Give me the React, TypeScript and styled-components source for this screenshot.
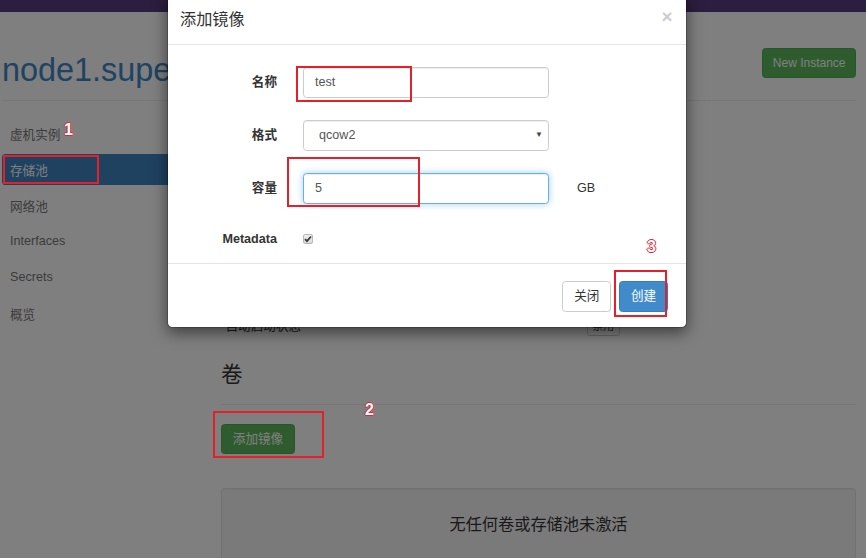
import React from "react";
import styled, { createGlobalStyle } from "styled-components";

const FONT = `"Liberation Sans", Arial, "Noto Sans CJK SC", sans-serif`;

const Global = createGlobalStyle`
  html, body { margin: 0; padding: 0; background: #fff; overflow: hidden; }
  body { font-family: ${FONT}; font-size: 12.6px; color: #333; }
  * { box-sizing: border-box; }
`;

const Frame = styled.div`
  position: relative;
  width: 866px;
  height: 558px;
  overflow: hidden;
  background: #fff;
`;

const Navbar = styled.div`
  height: 12px;
  background: #563d7c;
`;

const Container = styled.div`
  padding: 0 10px 0 2px;
`;

const PageHeader = styled.header`
  display: flex;
  justify-content: space-between;
  align-items: flex-start;
  height: 89px;
  padding-top: 36px;
  border-bottom: 1px solid #eee;
`;

const HostTitle = styled.h1`
  margin: 4px 0 0;
  font-size: 32.4px;
  line-height: 36px;
  font-weight: 400;
  color: #3f86c4;
  white-space: nowrap;
`;

const Btn = styled.button<{ $variant?: "default" | "primary" | "success"; $h?: number }>`
  display: inline-flex;
  align-items: center;
  justify-content: center;
  height: ${(p) => p.$h ?? 30}px;
  padding: 0 10.8px;
  font-family: ${FONT};
  font-size: 12.6px;
  line-height: 18px;
  border-radius: 3.6px;
  border: 1px solid
    ${(p) =>
      p.$variant === "primary" ? "#357ebd" : p.$variant === "success" ? "#4cae4c" : "#ccc"};
  background: ${(p) =>
    p.$variant === "primary" ? "#428bca" : p.$variant === "success" ? "#5cb85c" : "#fff"};
  color: ${(p) => (p.$variant === "default" || !p.$variant ? "#333" : "#fff")};
  cursor: pointer;
  white-space: nowrap;
`;

const NewInstanceBtn = styled(Btn)`
  font-size: 12px;
  padding: 0 9.5px;
`;

const Body = styled.div`
  display: flex;
`;

const Sidebar = styled.nav`
  width: 211px;
  flex: none;
  padding-top: 16.5px;
  display: flex;
  flex-direction: column;
  gap: 5px;
`;

const NavItem = styled.a<{ $active?: boolean }>`
  display: flex;
  align-items: center;
  height: 31px;
  padding: 0 8px;
  border-radius: 3.6px;
  font-size: 12.6px;
  color: ${(p) => (p.$active ? "#fff" : "#777")};
  background: ${(p) => (p.$active ? "#3f84c2" : "transparent")};
  text-decoration: none;
`;

const Main = styled.main`
  flex: 1;
  padding-left: 8px;
  display: flex;
  flex-direction: column;
`;

const SectionTitle = styled.h3<{ $mt: number; $divider?: boolean }>`
  margin: ${(p) => p.$mt}px 0 0;
  font-size: 21.6px;
  line-height: 24px;
  font-weight: 400;
  color: #333;
  ${(p) => (p.$divider ? "padding-bottom: 17px; border-bottom: 1px solid #eee;" : "")}
`;

const InfoRow = styled.div`
  margin-top: 210px;
  display: grid;
  grid-template-columns: 366px auto;
  align-items: center;
  height: 30px;
`;

const InfoLabel = styled.span`
  padding-left: 4.5px;
  color: #333;
  line-height: 18px;
`;

const XsBtn = styled.button`
  justify-self: start;
  height: 20px;
  padding: 0 4.5px;
  font-family: ${FONT};
  font-size: 10.8px;
  line-height: 16px;
  border: 1px solid #ccc;
  border-radius: 2.7px;
  background: #fff;
  color: #333;
`;

const AddRow = styled.div`
  margin-top: 19px;
  display: flex;
`;

const Well = styled.div`
  margin-top: 34px;
  min-height: 110px;
  padding: 17px;
  background: #f5f5f5;
  border: 1px solid #e3e3e3;
  border-radius: 3.6px;
  box-shadow: inset 0 1px 1px rgba(0, 0, 0, 0.05);
`;

const WellText = styled.h4`
  margin: 9px 0 0;
  font-size: 16.2px;
  line-height: 18px;
  font-weight: 400;
  text-align: center;
  color: #333;
`;

const Backdrop = styled.div`
  position: absolute;
  inset: 0;
  background: rgba(0, 0, 0, 0.5);
`;

const Modal = styled.div`
  position: absolute;
  top: -7px;
  left: 167px;
  width: 520px;
  background: #fff;
  background-clip: padding-box;
  border: 1px solid rgba(0, 0, 0, 0.2);
  border-radius: 5.4px;
  box-shadow: 0 5px 15px rgba(0, 0, 0, 0.5);
`;

const ModalHeader = styled.div`
  display: flex;
  justify-content: space-between;
  align-items: flex-start;
  padding: 13.5px 13.5px 13.5px 12px;
  border-bottom: 1px solid #e5e5e5;
`;

const ModalTitle = styled.h4`
  margin: 0;
  font-size: 16.2px;
  line-height: 23px;
  font-weight: 400;
  color: #333;
`;

const CloseX = styled.span`
  font-size: 18.9px;
  line-height: 18px;
  font-weight: 700;
  color: #000;
  opacity: 0.2;
`;

const ModalBody = styled.div`
  padding: 22px 14px 11px;
  display: flex;
  flex-direction: column;
  gap: 22.4px;
`;

const FormRow = styled.div<{ $h?: number }>`
  display: grid;
  grid-template-columns: 95px 246px auto;
  column-gap: 26px;
  align-items: center;
  height: ${(p) => p.$h ?? 30.6}px;
`;

const Label = styled.label`
  text-align: right;
  font-weight: 700;
  font-size: 12.6px;
  line-height: 18px;
  color: #333;
`;

const TextInput = styled.input<{ $focused?: boolean }>`
  width: 246px;
  height: 30.6px;
  padding: 0 11px;
  font-family: ${FONT};
  font-size: 12.6px;
  color: #555;
  background: #fff;
  border: 1px solid ${(p) => (p.$focused ? "#66afe9" : "#ccc")};
  border-radius: 3.6px;
  outline: none;
  box-shadow: ${(p) =>
    p.$focused
      ? "inset 0 1px 1px rgba(0,0,0,.075), 0 0 7px rgba(102,175,233,.6)"
      : "inset 0 1px 1px rgba(0,0,0,.075)"};
`;

const SelectBox = styled.div`
  display: flex;
  align-items: center;
  justify-content: space-between;
  width: 246px;
  height: 30.6px;
  padding: 0 5px 0 15px;
  font-size: 12.6px;
  color: #555;
  border: 1px solid #ccc;
  border-radius: 3.6px;
  box-shadow: inset 0 1px 1px rgba(0, 0, 0, 0.075);
`;

const Caret = styled.span`
  font-size: 8px;
  color: #444;
  line-height: 1;
`;

const Unit = styled.span`
  padding-left: 2px;
  font-size: 12.6px;
  color: #333;
`;

const CheckBox = styled.span`
  display: inline-flex;
  align-items: center;
  justify-content: center;
  width: 10px;
  height: 10px;
  border: 1px solid #b9b9b9;
  border-radius: 2px;
  background: linear-gradient(#f0f0f0, #d8d8d8);
`;

const ModalFooter = styled.div`
  display: flex;
  justify-content: flex-end;
  gap: 8px;
  padding: 17px 18px 15px;
  border-top: 1px solid #e5e5e5;
`;

const RedBox = styled.div<{ $x: number; $y: number; $w: number; $h: number }>`
  position: absolute;
  left: ${(p) => p.$x}px;
  top: ${(p) => p.$y}px;
  width: ${(p) => p.$w}px;
  height: ${(p) => p.$h}px;
  border: 2px solid #e5202a;
  pointer-events: none;
`;

const Marker = styled.span<{ $x: number; $y: number }>`
  position: absolute;
  left: ${(p) => p.$x}px;
  top: ${(p) => p.$y}px;
  font-family: ${FONT};
  font-size: 16px;
  font-weight: 700;
  line-height: 16px;
  color: #fff;
  text-shadow: 1px 0 0 #d8283a, -1px 0 0 #d8283a, 0 1px 0 #d8283a, 0 -1px 0 #d8283a;
`;

const navItems = ["虚机实例", "存储池", "网络池", "Interfaces", "Secrets", "概览"];

export default function App() {
  return (
    <Frame>
      <Global />
      <Navbar />
      <Container>
        <PageHeader>
          <HostTitle>node1.super</HostTitle>
          <NewInstanceBtn $variant="success" $h={30}>
            New Instance
          </NewInstanceBtn>
        </PageHeader>
        <Body>
          <Sidebar>
            {navItems.map((n) => (
              <NavItem key={n} $active={n === "存储池"}>
                {n}
              </NavItem>
            ))}
          </Sidebar>
          <Main>
            <InfoRow>
              <InfoLabel>自动启动状态</InfoLabel>
              <XsBtn>禁用</XsBtn>
            </InfoRow>
            <SectionTitle $mt={22} $divider>
              卷
            </SectionTitle>
            <AddRow>
              <Btn $variant="success">添加镜像</Btn>
            </AddRow>
            <Well>
              <WellText>无任何卷或存储池未激活</WellText>
            </Well>
          </Main>
        </Body>
      </Container>

      <Backdrop />

      <Modal>
        <ModalHeader>
          <ModalTitle>添加镜像</ModalTitle>
          <CloseX>×</CloseX>
        </ModalHeader>
        <ModalBody>
          <FormRow>
            <Label>名称</Label>
            <TextInput readOnly value="test" />
          </FormRow>
          <FormRow>
            <Label>格式</Label>
            <SelectBox>
              <span>qcow2</span>
              <Caret>▼</Caret>
            </SelectBox>
          </FormRow>
          <FormRow>
            <Label>容量</Label>
            <TextInput readOnly value="5" $focused />
            <Unit>GB</Unit>
          </FormRow>
          <FormRow $h={26}>
            <Label>Metadata</Label>
            <CheckBox>
              <svg width="8" height="8" viewBox="0 0 8 8">
                <path d="M1 4.2 L3 6.2 L7 1.5" fill="none" stroke="#3a3a3a" strokeWidth="1.8" />
              </svg>
            </CheckBox>
          </FormRow>
        </ModalBody>
        <ModalFooter>
          <Btn $h={31}>关闭</Btn>
          <Btn $variant="primary" $h={31}>
            创建
          </Btn>
        </ModalFooter>
      </Modal>

      <RedBox $x={3} $y={155} $w={96} $h={29} />
      <RedBox $x={296} $y={66} $w={116} $h={36} />
      <RedBox $x={287} $y={157} $w={133} $h={50} />
      <RedBox $x={614} $y={270} $w={53} $h={47} />
      <RedBox $x={213} $y={411} $w={111} $h={47} />
      <Marker $x={64} $y={122}>1</Marker>
      <Marker $x={365} $y={402}>2</Marker>
      <Marker $x={647} $y={239}>3</Marker>
    </Frame>
  );
}
